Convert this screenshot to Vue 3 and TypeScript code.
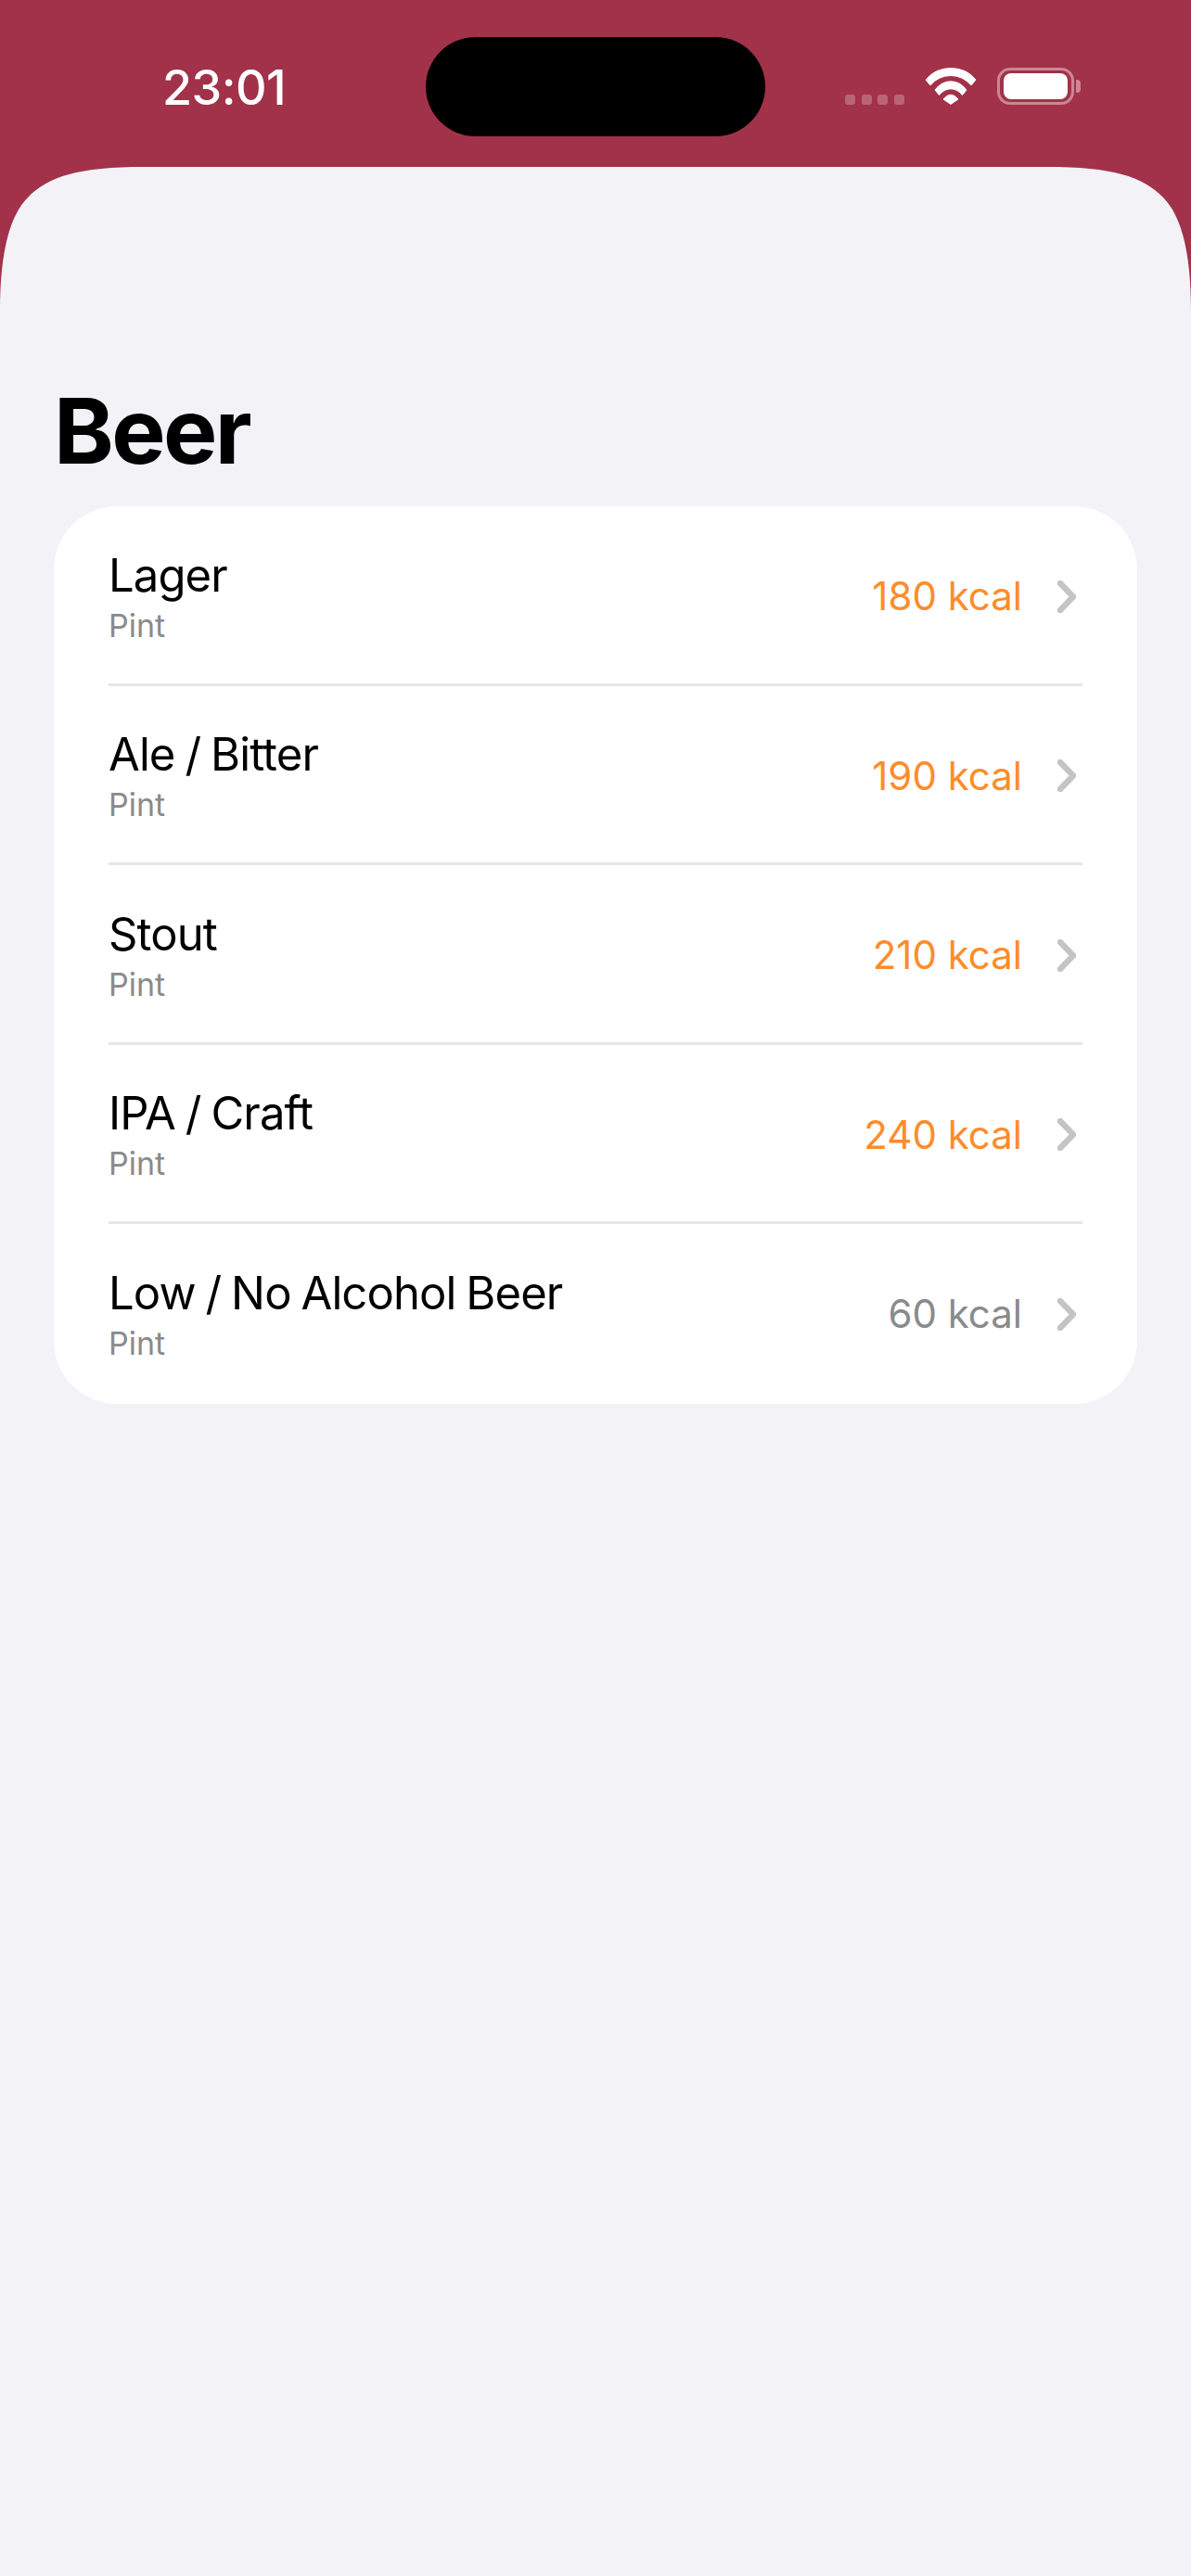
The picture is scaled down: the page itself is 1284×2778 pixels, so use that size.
<script setup lang="ts">
interface Drink {
  name: string;
  unit: string;
  kcal: number;
}

const drinks: Drink[] = [
  { name: 'Lager', unit: 'Pint', kcal: 180 },
  { name: 'Ale / Bitter', unit: 'Pint', kcal: 190 },
  { name: 'Stout', unit: 'Pint', kcal: 210 },
  { name: 'IPA / Craft', unit: 'Pint', kcal: 240 },
  { name: 'Low / No Alcohol Beer', unit: 'Pint', kcal: 60 },
];
</script>

<template>
  <div class="screen">
    <header class="status">
      <span class="time">23:01</span>
      <div class="island"></div>
      <div class="indicators">
        <div class="dots"><i></i><i></i><i></i><i></i></div>
        <svg class="wifi" width="56" height="40" viewBox="0 0 56 40" fill="#fff" stroke="#fff" stroke-width="1" stroke-linejoin="round">
          <path d="M1 13 Q11 .6 28 .6 Q45 .6 55 13 L50 19 Q41 8.5 28 8.5 Q15 8.5 6 19 Z" />
          <path d="M11 24 Q18 14.8 28 14.8 Q38 14.8 45 24 L40.5 29.5 Q35 22.8 28 22.8 Q21 22.8 15.5 29.5 Z" />
          <path d="M20 34 Q24 29.2 28 29.2 Q32 29.2 36 34 L28 39.4 Z" />
        </svg>
        <div class="battery">
          <div class="battery-body"><div class="battery-fill"></div></div>
          <div class="battery-cap"></div>
        </div>
      </div>
    </header>

    <main class="sheet">
      <h1 class="title">Beer</h1>
      <section class="card">
        <div v-for="drink in drinks" :key="drink.name" class="row">
          <div class="row-inner">
            <div class="labels">
              <div class="name">{{ drink.name }}</div>
              <div class="unit">{{ drink.unit }}</div>
            </div>
            <span class="kcal" :class="{ low: drink.kcal < 100 }">{{ drink.kcal }} kcal</span>
            <svg class="chevron" width="20" height="35" viewBox="0 0 20 35" fill="none" stroke="#c4c4c7" stroke-width="6.5" stroke-linecap="round" stroke-linejoin="round">
              <path d="M3 3 L17 17.5 L3 32" />
            </svg>
          </div>
        </div>
      </section>
    </main>
  </div>
</template>

<style scoped>
.screen {
  width: 1284px;
  height: 2778px;
  background: #a1324a;
  font-family: Inter, "Noto Sans", sans-serif;
  display: flex;
  flex-direction: column;
  overflow: hidden;
}

.status {
  height: 180px;
  flex: none;
  display: grid;
  grid-template-columns: 459px 366px 1fr;
  align-items: start;
}

.time {
  margin: 66px 0 0 175px;
  font-size: 52px;
  line-height: 58px;
  font-weight: 550;
  color: #fff;
  letter-spacing: -0.5px;
}

.island {
  margin-top: 40px;
  height: 107px;
  background: #000;
  border-radius: 54px;
}

.indicators {
  margin-top: 73px;
  padding-left: 86px;
  display: flex;
  align-items: flex-start;
}

.dots {
  display: flex;
  gap: 6.5px;
  margin-top: 29px;
  margin-right: 22px;
}

.dots i {
  width: 11px;
  height: 11px;
  border-radius: 3px;
  background: rgba(255, 255, 255, 0.25);
}

.wifi {
  display: block;
  margin-right: 22px;
}

.battery {
  display: flex;
  align-items: center;
  height: 40px;
}

.battery-body {
  width: 83px;
  height: 40px;
  box-sizing: border-box;
  padding: 3px 4px;
  border: 3px solid rgba(255, 255, 255, 0.42);
  border-radius: 14px;
}

.battery-fill {
  height: 100%;
  background: #fff;
  border-radius: 8px;
}

.battery-cap {
  width: 5px;
  height: 14px;
  margin-left: 2px;
  background: rgba(255, 255, 255, 0.42);
  border-radius: 0 4px 4px 0;
}

.sheet {
  flex: 1;
  background: #f2f2f7;
  padding: 0 58px;
  clip-path: path("M0 155 C0 100 8 55 30 33 C52 10 85 0 155 0 L1129 0 C1199 0 1232 10 1254 33 C1276 55 1284 100 1284 155 L1284 2598 L0 2598 Z");
}

.title {
  margin: 225px 0 0;
  height: 141px;
  font-size: 98px;
  line-height: 120px;
  font-weight: 700;
  color: #000;
  letter-spacing: -2.6px;
}

.card {
  background: #fff;
  border-radius: 68px;
  padding: 0 59px;
}

.row {
  height: 193.6px;
  box-sizing: border-box;
  border-bottom: 3px solid #e6e6e8;
}

.row:last-child {
  border-bottom: 0;
}

.row-inner {
  height: 191px;
  box-sizing: border-box;
  padding-top: 3px;
  display: flex;
  align-items: center;
}

.labels {
  flex: 1;
  min-width: 0;
}

.name {
  font-size: 49px;
  line-height: 58px;
  letter-spacing: -0.9px;
  word-spacing: -2px;
  color: #000;
}

.unit {
  margin-top: 5px;
  font-size: 34px;
  line-height: 40px;
  color: #8a8a8c;
}

.kcal {
  font-size: 42px;
  line-height: 50px;
  color: #ff8c2a;
}

.kcal.low {
  color: #8a8a8c;
}

.chevron {
  flex: none;
  margin: 0 7px 0 38px;
}
</style>

<style>
html,
body {
  background: #a1324a;
}
</style>
